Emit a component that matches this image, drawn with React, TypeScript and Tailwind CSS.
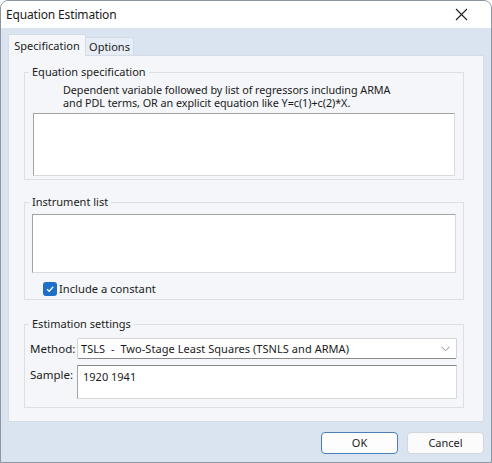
export default function App() {
  return (
    <div className="w-[492px] h-[463px] bg-[#dae4f0] flex flex-col border border-[#8c96a3] rounded-t-[8px] overflow-hidden font-['Noto_Sans',sans-serif] text-[11px] text-[#1b1b1b] leading-[14px]">
      <div className="h-[27px] bg-white flex items-center justify-between pl-[5px] pr-[23px] shrink-0">
        <span className="text-[12px] tracking-[-0.15px]">Equation Estimation</span>
        <svg width="13" height="13" viewBox="0 0 13 13">
          <path d="M1 1L12 12M12 1L1 12" stroke="#1f1f1f" strokeWidth="1.1" />
        </svg>
      </div>
      <div className="flex-1 flex flex-col px-[7px]">
        <div className="flex items-end h-[27px] pt-[6px]">
          <div className="relative z-10 -mb-px h-[22px] w-[78px] bg-[#f4f6f9] border border-b-0 border-[#d5dce6] flex items-center justify-center">
            Specification
          </div>
          <div className="h-[18px] w-[48px] bg-[#e6edf6] border border-b-0 border-l-0 border-[#d5dce6] flex items-center justify-center">
            Options
          </div>
        </div>
        <div className="h-[367px] bg-[#f4f6f9] border border-[#d5dce6] pl-[15px] pr-[19px] pt-[9px] flex flex-col">
          <fieldset className="border border-[#dcdfe3] pb-[3px]">
            <legend className="ml-[4px] px-[3px] leading-[14px]">Equation specification</legend>
            <div className="mt-[4px] pl-[38px] leading-[13px] text-[10.8px] tracking-[-0.05px]">
              <div>Dependent variable followed by list of regressors including ARMA</div>
              <div>and PDL terms, OR an explicit equation like Y=c(1)+c(2)*X.</div>
            </div>
            <div className="mt-[4px] mx-[8px] h-[63px] bg-white border border-[#dadada] border-t-[#a3a3a3] border-l-[#a3a3a3]" />
          </fieldset>
          <fieldset className="mt-[15px] border border-[#dcdfe3] pb-[3px]">
            <legend className="ml-[4px] px-[3px] leading-[14px]">Instrument list</legend>
            <div className="mt-[5px] mx-[7px] h-[59px] bg-white border border-[#dadada] border-t-[#a3a3a3] border-l-[#a3a3a3]" />
            <div className="mt-[9px] ml-[18px] flex items-center gap-[2px]">
              <div className="w-[14px] h-[14px] rounded-[3px] bg-[#1d6fc7] flex items-center justify-center">
                <svg width="10" height="10" viewBox="0 0 10 10">
                  <path d="M2 5.2L4.2 7.3L8.2 2.8" fill="none" stroke="white" strokeWidth="1.3" />
                </svg>
              </div>
              <span className="text-[11.2px]">Include a constant</span>
            </div>
          </fieldset>
          <fieldset className="mt-[17px] border border-[#dcdfe3] pb-[8px]">
            <legend className="ml-[4px] px-[3px] leading-[14px]">Estimation settings</legend>
            <div className="mt-[7px] flex items-center pl-[5px] pr-[6px]">
              <span className="w-[47px] text-[11.5px]">Method:</span>
              <div className="flex-1 h-[21px] bg-white border border-[#d4d4d4] border-b-[#8a8a8a] rounded-[2px] flex items-center justify-between pl-[3px] pr-[6px]">
                <span className="tracking-[0.05px]">TSLS&nbsp; - &nbsp;Two-Stage Least Squares (TSNLS and ARMA)</span>
                <svg width="9" height="6" viewBox="0 0 9 6">
                  <path d="M0.5 0.8L4.5 4.8L8.5 0.8" fill="none" stroke="#8a8a8a" strokeWidth="1" />
                </svg>
              </div>
            </div>
            <div className="mt-[6px] flex items-start pl-[5px] pr-[6px]">
              <span className="w-[47px] pt-[3px] text-[11.5px]">Sample:</span>
              <div className="flex-1 h-[34px] bg-white border border-[#dadada] border-t-[#8a8a8a] border-l-[#a3a3a3] pl-[5px] pt-[4px]">
                1920 1941
              </div>
            </div>
          </fieldset>
        </div>
        <div className="flex justify-end gap-[9px] mt-[10px]">
          <div className="w-[77px] h-[22px] rounded-[4px] bg-[#fdfdfd] border border-[#4b7fb8] flex items-center justify-center">
            OK
          </div>
          <div className="w-[77px] h-[22px] rounded-[4px] bg-[#fbfbfb] border border-[#d3d6da] flex items-center justify-center">
            Cancel
          </div>
        </div>
      </div>
    </div>
  );
}
